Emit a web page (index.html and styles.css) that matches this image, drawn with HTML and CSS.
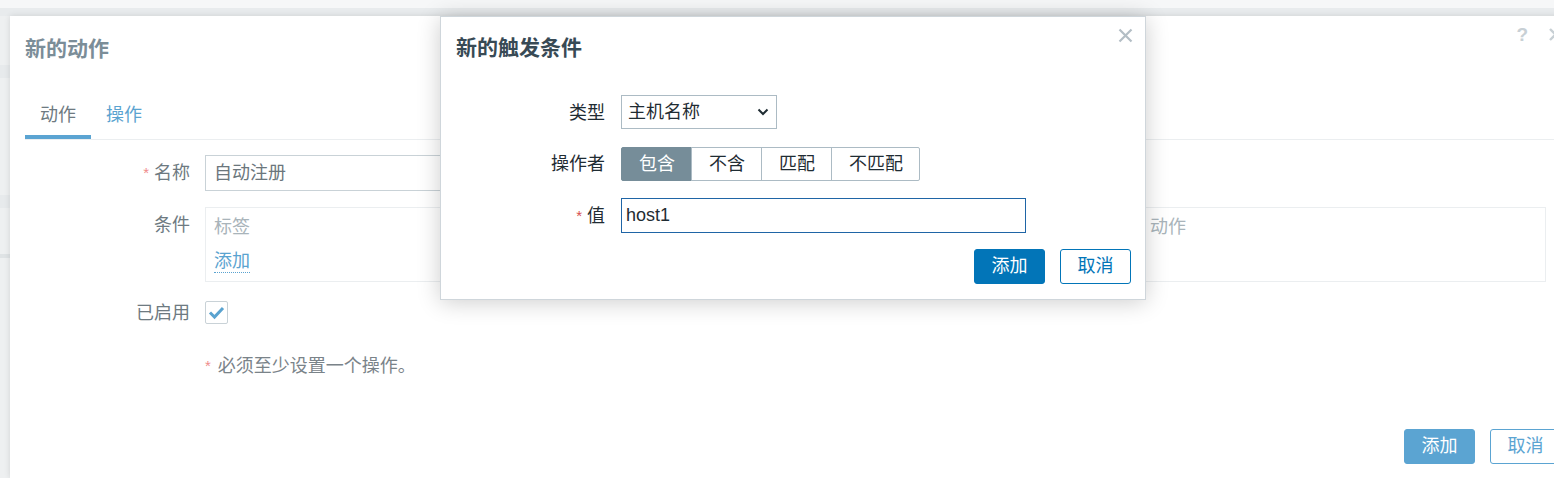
FILE: index.html
```html
<!DOCTYPE html>
<html lang="zh-CN">
<head>
    <meta charset="UTF-8">
    <title>新的动作</title>
    <link rel="stylesheet" href="styles.css">
</head>
<body>

<div class="dialog main-dialog">
    <div class="main-head">
        <h4 class="main-title">新的动作</h4>
        <div class="head-tools">
            <span class="help">?</span>
            <svg class="close-icon" width="15" height="15" viewBox="0 0 15 15"><path d="M2 2 L13 13 M13 2 L2 13" stroke="#c8d0d5" stroke-width="2.4" fill="none"/></svg>
        </div>
    </div>

    <ul class="tabs">
        <li class="tab active">动作</li>
        <li class="tab">操作</li>
    </ul>

    <div class="form">
        <div class="form-row row-name">
            <div class="form-label"><span class="req">*</span> 名称</div>
            <div class="text-box name-box">自动注册</div>
        </div>
        <div class="form-row row-cond">
            <div class="form-label">条件</div>
            <div class="cond-box">
                <div class="cond-col">
                    <div class="cond-head">标签</div>
                    <span class="link">添加</span>
                </div>
                <div class="cond-col">
                    <div class="cond-head">动作</div>
                </div>
            </div>
        </div>
        <div class="form-row row-enabled">
            <div class="form-label">已启用</div>
            <div class="checkbox">
                <svg width="21" height="21" viewBox="0 0 21 21"><path d="M4 10.5 L8.5 15 L17 6" stroke="#5aa3d0" stroke-width="3" fill="none"/></svg>
            </div>
        </div>
        <div class="form-row row-note">
            <div></div>
            <div class="note"><span class="req">*</span> 必须至少设置一个操作。</div>
        </div>
    </div>

    <div class="main-foot">
        <span class="btn btn-main">添加</span>
        <span class="btn btn-alt">取消</span>
    </div>
</div>

<div class="dialog trigger-dialog">
    <h4 class="trigger-title">新的触发条件</h4>
    <svg class="trigger-close" width="15" height="15" viewBox="0 0 15 15"><path d="M1.5 1.5 L13.5 13.5 M13.5 1.5 L1.5 13.5" stroke="#b3bec5" stroke-width="2.2" fill="none"/></svg>

    <div class="trigger-form">
        <div class="trigger-label">类型</div>
        <div class="select-box">
            <span>主机名称</span>
            <svg width="12" height="8" viewBox="0 0 12 8"><path d="M1.5 1.5 L6 6 L10.5 1.5" stroke="#1f2c33" stroke-width="2" fill="none"/></svg>
        </div>

        <div class="trigger-label">操作者</div>
        <div class="segments">
            <span class="segment selected">包含</span>
            <span class="segment">不含</span>
            <span class="segment">匹配</span>
            <span class="segment">不匹配</span>
        </div>

        <div class="trigger-label"><span class="req-dark">*</span> 值</div>
        <div class="value-box">host1</div>
    </div>

    <div class="trigger-foot">
        <span class="btn btn-primary">添加</span>
        <span class="btn btn-outline">取消</span>
    </div>
</div>

</body>
</html>
```

FILE: styles.css
```css
* {
    box-sizing: border-box;
}
body {
    margin: 0;
    height: 478px;
    overflow: hidden;
    padding: 16px 0 0 10px;
    font-family: "Liberation Sans", "Noto Sans CJK SC", sans-serif;
    font-size: 18px;
    line-height: 24px;
    color: #1f2c33;
    background:
        linear-gradient(to bottom, transparent 0 65px, #e7eaec 65px 78px, transparent 78px 195px, #e7eaec 195px 208px, transparent 208px 254px, #dfe3e5 254px 258px, transparent 258px),
        linear-gradient(to bottom, #f6f7f8 0 8px, #e8ebed 8px 16px, #eef0f1 16px);
}

.dialog {
    background: #fff;
}
.main-dialog {
    width: 1566px;
    height: 462px;
    box-shadow: 0 0 6px rgba(0, 0, 0, 0.12);
}
.main-head {
    display: flex;
    justify-content: space-between;
    align-items: center;
    height: 65px;
    padding: 0 13px 0 15px;
}
.main-title {
    margin: 0;
    font-size: 21px;
    line-height: 30px;
    font-weight: bold;
    color: #7b8d98;
}
.head-tools {
    align-self: flex-start;
    display: flex;
    align-items: center;
    gap: 20px;
    margin-top: 11px;
}
.help {
    font-weight: bold;
    font-size: 19px;
    line-height: 15px;
    color: #c8d0d5;
}

.tabs {
    display: flex;
    list-style: none;
    margin: 0 15px;
    padding: 22px 0 0;
    border-bottom: 1px solid #ebeef0;
}
.tab {
    padding: 0 15px 8px;
    border-bottom: 4px solid transparent;
    color: #5aa3d0;
}
.tab.active {
    color: #6e7a81;
    border-bottom-color: #5ba4d2;
}

.form {
    padding: 15px 15px 0;
}
.form-row {
    display: grid;
    grid-template-columns: 165px auto;
    column-gap: 15px;
    align-items: start;
}
.form-label {
    text-align: right;
    color: #6e7a81;
    line-height: 36px;
}
.req {
    color: #ef8c8c;
    font-size: 15px;
    vertical-align: top;
}
.row-name {
    margin-bottom: 16px;
}
.text-box {
    height: 36px;
    border: 1px solid #c9d2d7;
    padding: 0 8px;
    line-height: 34px;
    color: #6b767c;
}
.name-box {
    width: 680px;
}
.row-cond {
    margin-bottom: 18px;
}
.cond-box {
    display: grid;
    grid-template-columns: 936px auto;
    width: 1341px;
    height: 75px;
    border: 1px solid #ebeef0;
    padding: 7px 8px 0;
}
.cond-head {
    color: #a9b4ba;
    margin-bottom: 10px;
}
.link {
    display: inline-block;
    line-height: 21px;
    color: #5aa3d0;
    border-bottom: 1px dotted #5aa3d0;
}
.row-enabled .form-label {
    line-height: 26px;
}
.checkbox {
    width: 23px;
    height: 23px;
    margin-top: 1px;
    border: 1px solid #c9d2d7;
    border-radius: 2px;
}
.checkbox svg {
    display: block;
}
.row-note {
    margin-top: 28px;
}
.note {
    color: #7a8389;
}
.note .req {
    margin-right: 2px;
}

.main-foot {
    display: flex;
    justify-content: flex-end;
    gap: 15px;
    margin-top: 51px;
    padding-right: 15px;
}
.btn {
    display: inline-block;
    width: 71px;
    height: 35px;
    line-height: 33px;
    text-align: center;
    border-radius: 3px;
    border: 1px solid;
}
.btn-main {
    background: #5ba4d2;
    border-color: #5ba4d2;
    color: #fff;
}
.btn-alt {
    background: #fff;
    border-color: #5ba4d2;
    color: #5ba4d2;
}

.trigger-dialog {
    position: absolute;
    left: 440px;
    top: 16px;
    width: 706px;
    height: 284px;
    border: 1px solid #cfd6db;
    padding: 16px 14px 0 15px;
    box-shadow: 0 2px 22px rgba(0, 0, 0, 0.2);
}
.trigger-title {
    margin: 0 0 32px;
    font-size: 21px;
    line-height: 30px;
    font-weight: bold;
    color: #384a55;
}
.trigger-close {
    position: absolute;
    top: 11px;
    right: 12px;
}
.trigger-form {
    display: grid;
    grid-template-columns: 149px auto;
    column-gap: 16px;
    row-gap: 17px;
    align-items: center;
    justify-items: start;
}
.trigger-label {
    justify-self: end;
    line-height: 34px;
}
.req-dark {
    color: #d64e4e;
    font-size: 15px;
    vertical-align: top;
}
.select-box {
    display: flex;
    justify-content: space-between;
    align-items: center;
    width: 156px;
    height: 34px;
    border: 1px solid #acbbc4;
    padding: 0 7px 0 6px;
    margin-bottom: 1px;
}
.select-box svg {
    display: block;
}
.segments {
    display: flex;
    height: 34px;
}
.segment {
    padding: 0 16px 0 17px;
    line-height: 32px;
    border: 1px solid #acbbc4;
    margin-left: -1px;
}
.segment:first-child {
    margin-left: 0;
    border-radius: 2px 0 0 2px;
}
.segment:last-child {
    border-radius: 0 2px 2px 0;
}
.segment.selected {
    background: #768d99;
    border-color: #768d99;
    color: #fff;
}
.value-box {
    width: 405px;
    height: 35px;
    border: 1px solid #1f65a6;
    padding: 0 4px;
    line-height: 33px;
}

.trigger-foot {
    display: flex;
    justify-content: flex-end;
    gap: 15px;
    margin-top: 16px;
}
.btn-primary {
    background: #0275b8;
    border-color: #0275b8;
    color: #fff;
}
.btn-outline {
    background: #fff;
    border-color: #0275b8;
    color: #0275b8;
}
```
